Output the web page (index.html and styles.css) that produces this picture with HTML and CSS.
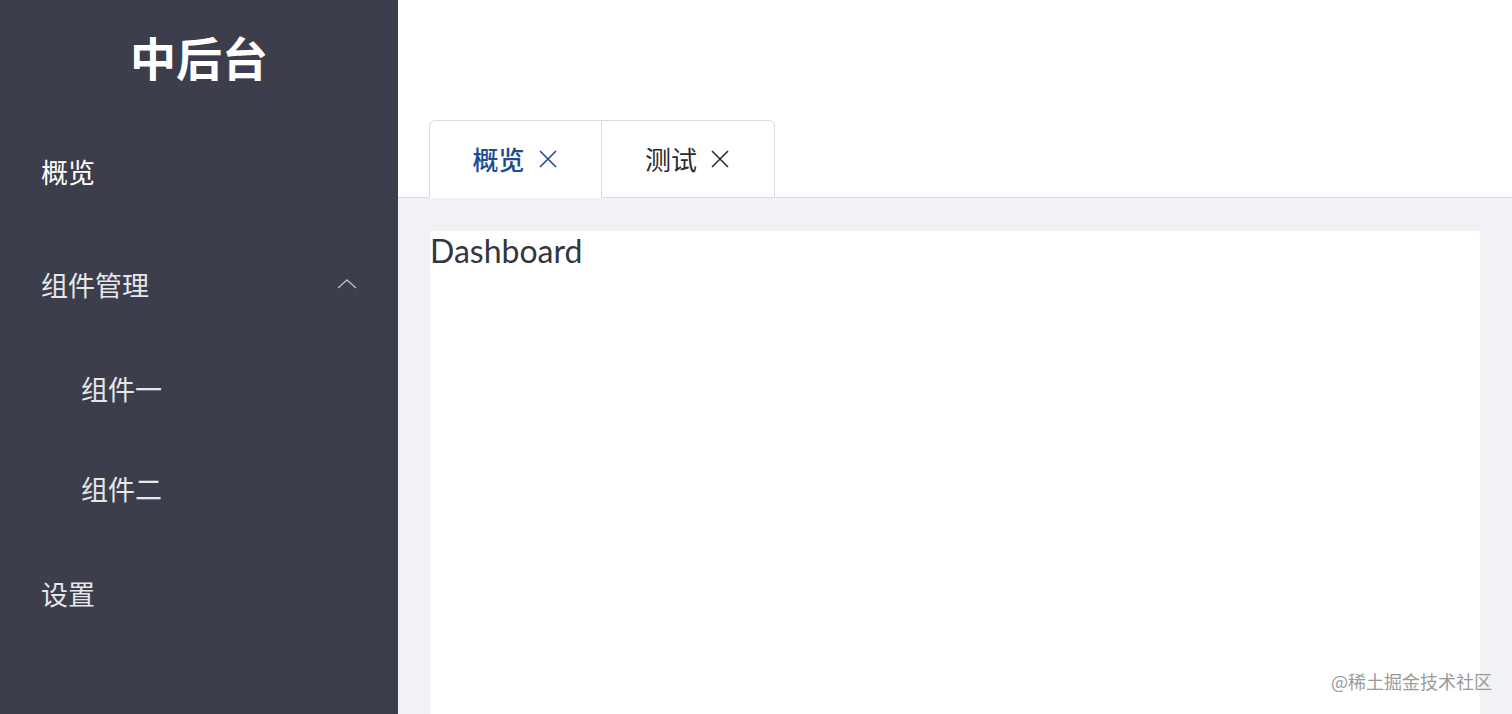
FILE: index.html
```html
<!DOCTYPE html>
<html lang="zh-CN">
<head>
  <meta charset="UTF-8" />
  <meta name="viewport" content="width=device-width, initial-scale=1.0" />
  <title>中后台</title>
  <link rel="stylesheet" href="styles.css">
</head>
<body>
  <div class="layout">
    <aside class="sidebar">
      <div class="logo">中后台</div>
      <ul class="menu">
        <li class="menu-item first">概览</li>
        <li class="menu-item submenu-title">
          <span>组件管理</span>
          <svg class="arrow" width="20" height="12" viewBox="0 0 20 12"><path d="M1 10 L10 2 L19 10" fill="none" stroke="#b9bac2" stroke-width="1.4"/></svg>
        </li>
        <li class="menu-item sub">组件一</li>
        <li class="menu-item sub">组件二</li>
        <li class="menu-item last">设置</li>
      </ul>
    </aside>
    <main class="main">
      <header class="header">
        <div class="tabs">
          <div class="tab active">概览
            <svg class="close" width="18" height="18" viewBox="0 0 18 18"><path d="M1 1 L17 17 M17 1 L1 17" stroke="currentColor" stroke-width="1.6" fill="none"/></svg>
          </div>
          <div class="tab">测试
            <svg class="close" width="18" height="18" viewBox="0 0 18 18"><path d="M1 1 L17 17 M17 1 L1 17" stroke="currentColor" stroke-width="1.6" fill="none"/></svg>
          </div>
        </div>
      </header>
      <section class="content">
        <div class="card">Dashboard</div>
      </section>
    </main>
  </div>
  <div class="watermark">@稀土掘金技术社区</div>
</body>
</html>
```

FILE: styles.css
```css
html, body {
  margin: 0;
  height: 100%;
}
body {
  font-family: "Noto Sans", "Noto Sans CJK SC", sans-serif;
  overflow: hidden;
}
.layout {
  display: flex;
  height: 714px;
}
.sidebar {
  width: 398px;
  flex-shrink: 0;
  background: #3c3e4c;
  color: #e6e7ea;
}
.logo {
  height: 120px;
  line-height: 120px;
  text-align: center;
  font-size: 46px;
  font-weight: bold;
  color: #ffffff;
  margin-top: -2px;
}
.menu {
  list-style: none;
  margin: 0;
  padding: 0;
}
.menu-item {
  box-sizing: border-box;
  display: flex;
  align-items: center;
  justify-content: space-between;
  height: 100px;
  padding: 0 40px 0 41px;
  font-size: 27px;
}
.menu-item.first {
  height: 106px;
  color: #ffffff;
}
.submenu-title {
  height: 114px;
  padding-top: 6px;
}
.arrow {
  margin-right: 1px;
}
.sub {
  padding-left: 81px;
}
.menu-item.last {
  height: 110px;
}
.main {
  flex: 1;
  display: flex;
  flex-direction: column;
  background: #f0f2f5;
}
.header {
  height: 197px;
  background: #ffffff;
  border-bottom: 1px solid #d8dadf;
  display: flex;
  align-items: flex-end;
  padding-left: 31px;
}
.tabs {
  display: flex;
  margin-bottom: -1px;
}
.tab {
  box-sizing: border-box;
  width: 173px;
  height: 78px;
  border: 1px solid #d8dadf;
  border-radius: 6px 6px 0 0;
  background: #ffffff;
  display: flex;
  align-items: center;
  justify-content: center;
  font-size: 26px;
  color: #2b2b2b;
  padding-right: 2px;
}
.tab + .tab {
  border-left: none;
  border-radius: 0 6px 0 0;
}
.tab.active {
  color: #1f4b91;
  border-bottom-color: #ffffff;
  border-radius: 6px 0 0 0;
  font-weight: 500;
}
.close {
  margin-left: 14px;
}
.content {
  flex: 1;
  padding: 33px 32px 0 32px;
}
.card {
  height: 100%;
  background: #ffffff;
  font-family: Lato, "Noto Sans", sans-serif;
  font-size: 32px;
  color: #333640;
  line-height: 40px;
}
.watermark {
  position: absolute;
  right: 20px;
  bottom: 20px;
  font-size: 18px;
  color: #9a9a9a;
  font-family: "Noto Sans CJK SC", sans-serif;
}
```
